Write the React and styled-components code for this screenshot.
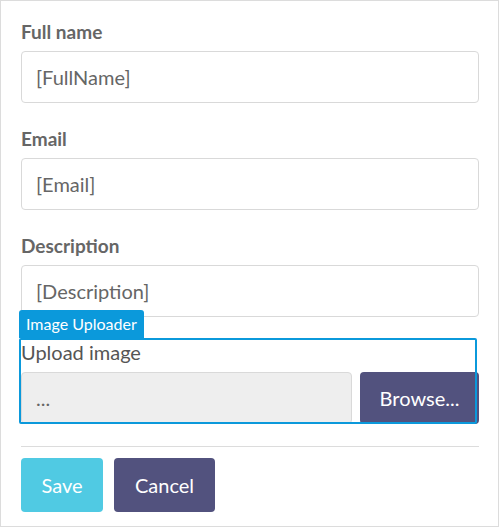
import React from 'react';
import styled, { createGlobalStyle } from 'styled-components';

const GlobalStyle = createGlobalStyle`
  * { box-sizing: border-box; }
  body {
    margin: 0;
    background: #fff;
    font-family: Lato, "Open Sans", sans-serif;
  }
`;

const Page = styled.div`
  width: 499px;
  height: 527px;
  border: 1px solid #dcdcdc;
  padding: 19px 19px 0 20px;
`;

const Group = styled.div`
  margin-bottom: ${({ $last }) => ($last ? '0' : '24px')};
`;

const Label = styled.div`
  font-size: 19px;
  font-weight: 700;
  line-height: 24px;
  color: #666;
  margin-bottom: 7px;
`;

const Input = styled.div`
  height: 52px;
  border: 1px solid #d9d9d9;
  border-radius: 4px;
  padding: 0 14px;
  display: flex;
  align-items: center;
  font-size: 20px;
  color: #666;
  background: #fff;
`;

const Uploader = styled.div`
  position: relative;
  margin-top: -7px;
`;

const Tag = styled.div`
  display: inline-block;
  margin-left: -2px;
  height: 28px;
  line-height: 28px;
  padding: 0 7px;
  background: #0b99db;
  color: #fff;
  font-size: 16px;
  border-radius: 3px 3px 0 0;
`;

const UploadBody = styled.div`
  position: relative;
  margin-top: 2px;
`;

const Frame = styled.div`
  position: absolute;
  top: -2px;
  left: -2px;
  right: 2px;
  bottom: 0;
  border: 2px solid #0b99db;
  border-radius: 2px;
  pointer-events: none;
`;

const UploadLabel = styled(Label)`
  font-weight: 400;
  color: #555;
  font-size: 20px;
  margin-bottom: 8px;
`;

const FileRow = styled.div`
  display: flex;
  gap: 8px;
`;

const FileField = styled(Input)`
  flex: 1;
  background: #eee;
`;

const Button = styled.button`
  height: ${({ $h }) => $h || 54}px;
  width: ${({ $w }) => $w}px;
  border: none;
  border-radius: 4px;
  background: ${({ $color }) => $color};
  color: #fff;
  font-family: Lato, "Open Sans", sans-serif;
  font-size: 20px;
  padding: 0;
`;

const Divider = styled.hr`
  border: none;
  border-top: 1px solid #dcdcdc;
  margin: 22px 0 11px;
`;

const Actions = styled.div`
  display: flex;
  gap: 11px;
`;

export default function App() {
  return (
    <>
      <GlobalStyle />
      <Page>
        <Group>
          <Label>Full name</Label>
          <Input>[FullName]</Input>
        </Group>
        <Group>
          <Label>Email</Label>
          <Input>[Email]</Input>
        </Group>
        <Group $last>
          <Label>Description</Label>
          <Input>[Description]</Input>
        </Group>
        <Uploader>
          <Tag>Image Uploader</Tag>
          <UploadBody>
            <UploadLabel>Upload image</UploadLabel>
            <FileRow>
              <FileField>...</FileField>
              <Button $w={119} $h={52} $color="#52527e">Browse...</Button>
            </FileRow>
            <Frame />
          </UploadBody>
        </Uploader>
        <Divider />
        <Actions>
          <Button $w={82} $color="#50cae3">Save</Button>
          <Button $w={101} $color="#52527e">Cancel</Button>
        </Actions>
      </Page>
    </>
  );
}
